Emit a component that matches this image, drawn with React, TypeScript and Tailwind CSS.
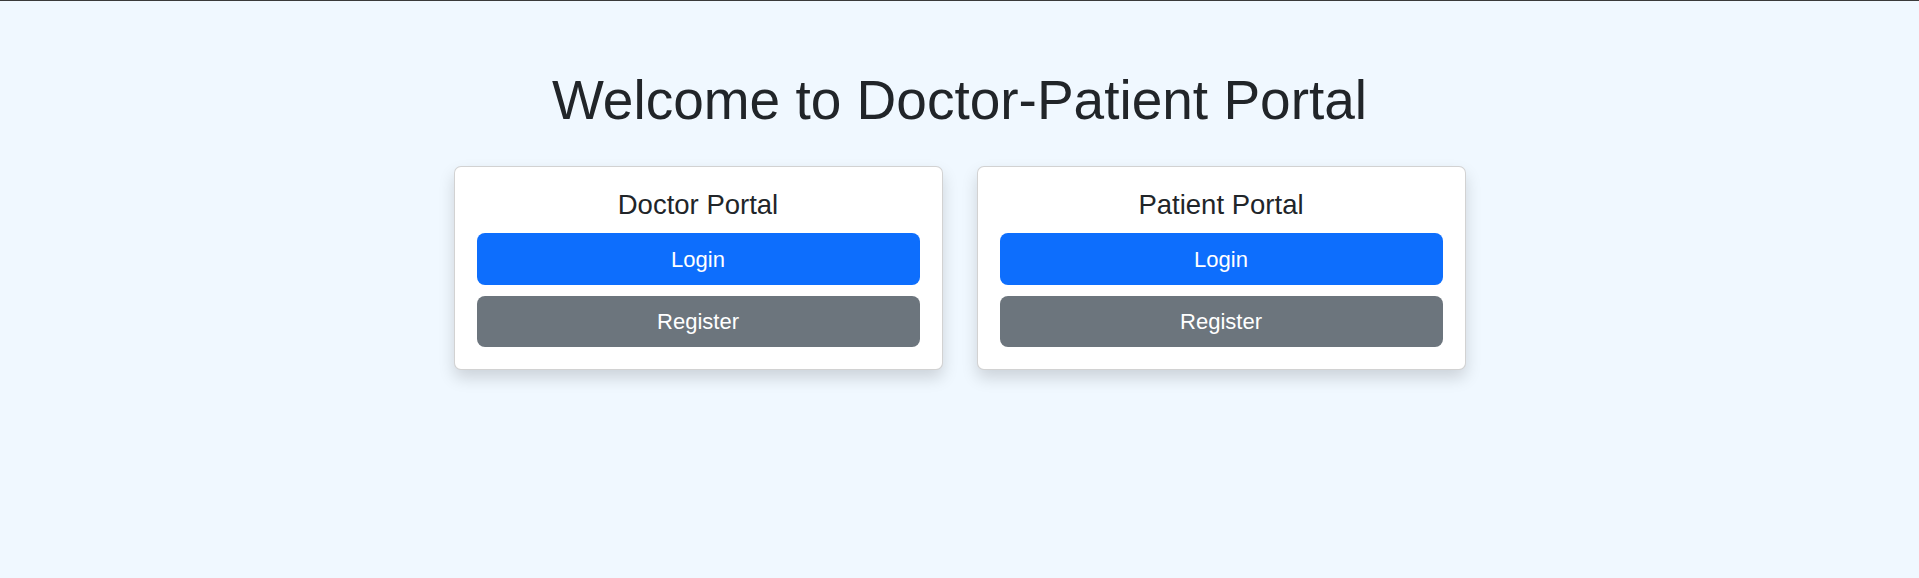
export default function App() {
  const portals = [
    { key: "doctor", title: "Doctor Portal" },
    { key: "patient", title: "Patient Portal" },
  ];

  return (
    <div
      className="min-h-screen bg-[#f0f8ff] border-t border-[#3a3a3a] text-[#212529]"
      style={{ fontFamily: '"Liberation Sans", Arial, sans-serif' }}
    >
      <div className="pt-[66px] flex flex-col items-center">
        <h1 className="text-[55px] leading-[66px] font-normal text-center">
          Welcome to Doctor-Patient Portal
        </h1>

        <div className="mt-[33px] flex justify-center gap-[34px]">
          {portals.map(p => (
            <div
              key={p.key}
              className="w-[489px] bg-white border border-black/[0.175] rounded-[7px] px-[22px] pt-[21px] pb-[22px] shadow-[0_8px_16px_rgba(0,0,0,0.15)]"
            >
              <h4 className="text-[27.5px] leading-[34px] text-center mb-[11px]">{p.title}</h4>
              <button className="w-full h-[52px] rounded-[8px] bg-[#0d6efd] text-white text-[22px] mb-[11px]">
                Login
              </button>
              <button className="w-full h-[51px] rounded-[8px] bg-[#6c757d] text-white text-[22px]">
                Register
              </button>
            </div>
          ))}
        </div>
      </div>
    </div>
  );
}
